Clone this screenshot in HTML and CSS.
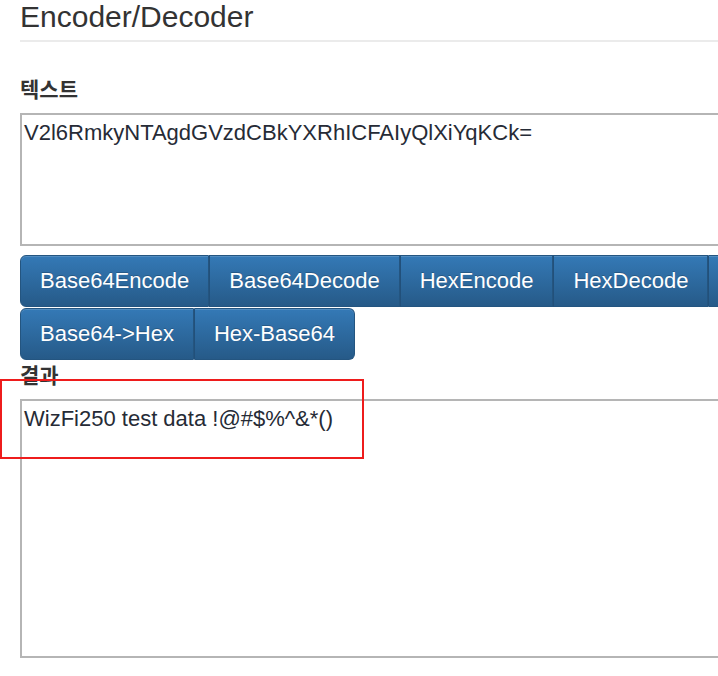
FILE: index.html
```html
<!DOCTYPE html>
<html lang="ko">
<head>
<meta charset="utf-8">
<title>Encoder/Decoder</title>
<link rel="stylesheet" href="styles.css">
</head>
<body>
<div class="page">
  <h1 class="title">Encoder/Decoder</h1>
  <div class="rule"></div>
  <label class="field-label">텍스트</label>
  <div class="textbox textbox-input">V2l6RmkyNTAgdGVzdCBkYXRhICFAIyQlXiYqKCk=</div>
  <div class="btn-row btn-row-first">
    <button class="btn">Base64Encode</button>
    <button class="btn">Base64Decode</button>
    <button class="btn">HexEncode</button>
    <button class="btn">HexDecode</button>
    <button class="btn btn-more" aria-label="more"></button>
  </div>
  <div class="btn-row">
    <button class="btn">Base64-&gt;Hex</button>
    <button class="btn">Hex-Base64</button>
  </div>
  <label class="field-label field-label-result">결과</label>
  <div class="textbox textbox-result">WizFi250 test data !@#$%^&amp;*()</div>
  <div class="highlight"></div>
</div>
</body>
</html>
```
FILE: styles.css
```css
html, body {
  margin: 0;
  padding: 0;
  overflow: hidden;
  background: #ffffff;
}

body {
  width: 718px;
  height: 676px;
  font-family: "Liberation Sans", Arial, "Noto Sans CJK KR", sans-serif;
  color: #333333;
}

.page {
  position: relative;
  width: 1000px;
  padding-left: 20px;
  display: flex;
  flex-direction: column;
  align-items: flex-start;
}

.title {
  margin: 0;
  font-size: 30px;
  line-height: 33px;
  font-weight: normal;
  color: #333333;
}

.rule {
  align-self: stretch;
  margin-top: 7px;
  height: 0;
  border-top: 2px solid #ebebeb;
}

.field-label {
  display: block;
  margin-top: 34px;
  font-family: "Noto Sans CJK KR", "Liberation Sans", sans-serif;
  font-size: 21px;
  line-height: 24px;
  font-weight: bold;
  color: #333333;
}

.field-label-result {
  margin-top: 2px;
}

.textbox {
  align-self: stretch;
  box-sizing: border-box;
  border: 2px solid #b5b5b5;
  background: #ffffff;
  padding: 5px 2px;
  font-size: 22px;
  line-height: 26px;
  color: #262b36;
}

.textbox-input {
  margin-top: 13px;
  height: 133px;
}

.textbox-result {
  margin-top: 13px;
  height: 259px;
}

.btn-row {
  display: flex;
  flex-wrap: nowrap;
}

.btn-row-first {
  margin-top: 9px;
  margin-bottom: 1px;
}

.btn {
  margin: 0;
  padding: 10px 19px;
  font-family: "Liberation Sans", Arial, sans-serif;
  font-size: 22px;
  line-height: 30px;
  color: #ffffff;
  white-space: nowrap;
  background: linear-gradient(to bottom, #3479b6 0%, #265a88 100%);
  border: 1px solid #245580;
  text-shadow: 0 -1px 0 rgba(0, 0, 0, 0.2);
  box-shadow: inset 0 1px 0 rgba(255, 255, 255, 0.15);
  border-radius: 0;
}

.btn + .btn {
  border-left-color: #22507a;
}

.btn-more {
  width: 150px;
  height: 52px;
}

.btn:first-child {
  border-top-left-radius: 6px;
  border-bottom-left-radius: 6px;
}

.btn:last-child {
  border-top-right-radius: 6px;
  border-bottom-right-radius: 6px;
}

.highlight {
  position: absolute;
  left: 0;
  top: 379px;
  width: 364px;
  height: 80px;
  box-sizing: border-box;
  border: 2px solid #ee1c1c;
}
```
